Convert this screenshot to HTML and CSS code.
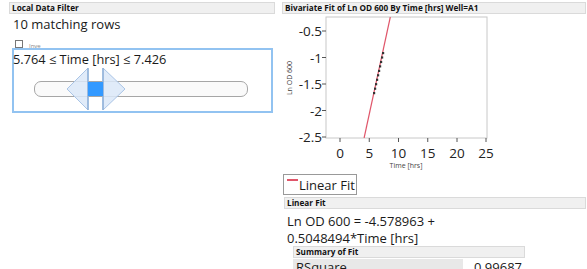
FILE: index.html
```html
<!DOCTYPE html>
<html lang="en">
<head>
    <meta charset="UTF-8">
    <title>Bivariate Fit</title>
    <link rel="stylesheet" href="styles.css">
</head>
<body>
    <div class="app">
        <section class="filter">
            <div class="hdr">Local Data Filter</div>
            <div class="count">10 matching rows</div>
            <div class="invert">
                <span class="check"></span>
                <span class="invert-label">Inve</span>
            </div>
            <div class="range">
                <div class="range-text">5.764 ≤ Time [hrs] ≤ 7.426</div>
                <div class="slider">
                    <div class="track"></div>
                    <svg class="handles" width="64" height="42" viewBox="0 0 64 42">
                        <polygon points="0,21 21,0 21,42" fill="#dbe8f8" fill-opacity="0.85" stroke="#a9c4e6" stroke-width="1"/>
                        <line x1="21" y1="0" x2="21" y2="42" stroke="#8fb0d8" stroke-width="1.5"/>
                        <polygon points="58,21 36,0 36,42" fill="#dbe8f8" fill-opacity="0.85" stroke="#a9c4e6" stroke-width="1"/>
                        <line x1="36" y1="0" x2="36" y2="42" stroke="#8fb0d8" stroke-width="1.5"/>
                        <rect x="21" y="14" width="15" height="14" fill="#3399ff"/>
                    </svg>
                </div>
            </div>
        </section>

        <section class="report">
            <div class="hdr">Bivariate Fit of Ln OD 600 By Time [hrs] Well=A1</div>
            <svg class="plot" width="220" height="158" viewBox="0 0 220 158">
                <defs>
                    <clipPath id="frame"><rect x="44" y="3" width="161" height="121"/></clipPath>
                </defs>
                <rect x="44" y="3" width="161" height="121" fill="#fff" stroke="#c8c8c8"/>
                <g stroke="#555" stroke-width="1">
                    <line x1="40" y1="17" x2="44" y2="17"/>
                    <line x1="40" y1="43.5" x2="44" y2="43.5"/>
                    <line x1="40" y1="70" x2="44" y2="70"/>
                    <line x1="40" y1="96.5" x2="44" y2="96.5"/>
                    <line x1="40" y1="123" x2="44" y2="123"/>
                    <line x1="58" y1="124" x2="58" y2="128"/>
                    <line x1="87.25" y1="124" x2="87.25" y2="128"/>
                    <line x1="116.5" y1="124" x2="116.5" y2="128"/>
                    <line x1="145.75" y1="124" x2="145.75" y2="128"/>
                    <line x1="175" y1="124" x2="175" y2="128"/>
                    <line x1="204" y1="124" x2="204" y2="128"/>
                </g>
                <g class="tick" text-anchor="end">
                    <text x="40" y="22">-0.5</text>
                    <text x="40" y="48.5">-1</text>
                    <text x="40" y="75">-1.5</text>
                    <text x="40" y="101.5">-2</text>
                    <text x="40" y="128">-2.5</text>
                </g>
                <g class="tick" text-anchor="middle">
                    <text x="58" y="144">0</text>
                    <text x="87.25" y="144">5</text>
                    <text x="116.5" y="144">10</text>
                    <text x="145.75" y="144">15</text>
                    <text x="175" y="144">20</text>
                    <text x="204" y="144">25</text>
                </g>
                <text class="axis-title" x="10" y="64" text-anchor="middle" transform="rotate(-90 10 64)">Ln OD 600</text>
                <text class="axis-title" x="124" y="154" text-anchor="middle">Time [hrs]</text>
                <g clip-path="url(#frame)">
                    <line x1="82.1" y1="124" x2="108.3" y2="3" stroke="#e0566a" stroke-width="1.2"/>
                </g>
                <g fill="#333">
                    <rect x="91" y="78" width="2.2" height="2.2"/>
                    <rect x="92" y="73.6" width="2.2" height="2.2"/>
                    <rect x="93" y="69.1" width="2.2" height="2.2"/>
                    <rect x="94" y="64.7" width="2.2" height="2.2"/>
                    <rect x="95" y="60.2" width="2.2" height="2.2"/>
                    <rect x="96" y="55.8" width="2.2" height="2.2"/>
                    <rect x="97" y="51.3" width="2.2" height="2.2"/>
                    <rect x="98" y="46.9" width="2.2" height="2.2"/>
                    <rect x="99" y="42.4" width="2.2" height="2.2"/>
                    <rect x="100" y="38" width="2.2" height="2.2"/>
                </g>
            </svg>

            <div class="legend"><span class="swatch"></span>Linear Fit</div>

            <div class="hdr fit-hdr">Linear Fit</div>
            <div class="equation">
                <div>Ln OD 600 = -4.578963 +</div>
                <div>0.5048494*Time [hrs]</div>
            </div>

            <div class="summary">
                <div class="hdr">Summary of Fit</div>
                <div class="row">
                    <span class="row-key">RSquare</span>
                    <span class="row-val">0.99687</span>
                </div>
            </div>
        </section>
    </div>
</body>
</html>
```

FILE: styles.css
```css
body {
    margin: 0;
    width: 587px;
    height: 269px;
    overflow: hidden;
    background: #fff;
    color: #1a1a1a;
    font-family: "Open Sans", "Noto Sans", sans-serif;
}
.app {
    display: flex;
    padding-top: 2px;
}
.hdr {
    height: 10px;
    line-height: 10px;
    font-size: 8.2px;
    font-weight: bold;
    padding-left: 2px;
    background: #f0f0f0;
    border: 1px solid #dadada;
    color: #111;
    white-space: nowrap;
    overflow: hidden;
}

/* left side: data filter */
.filter {
    margin-left: 9px;
    width: 266px;
}
.count {
    font-size: 13px;
    line-height: 18px;
    margin-top: 1px;
    padding-left: 4px;
}
.invert {
    position: relative;
    height: 8px;
    padding: 7px 0 0 6px;
}
.check {
    display: block;
    width: 6px;
    height: 6px;
    border: 1px solid #777;
}
.invert-label {
    position: absolute;
    left: 20px;
    top: 9px;
    font-size: 6px;
    line-height: 8px;
    color: #888;
}
.range {
    margin-left: 3px;
    width: 257px;
    height: 61px;
    border: 2px solid #92c3f1;
}
.range-text {
    font-size: 12.8px;
    line-height: 18px;
    margin-left: -1px;
}
.slider {
    position: relative;
    margin: 13px 0 0 20px;
    width: 214px;
}
.track {
    height: 14px;
    border: 1px solid #a6a6a6;
    border-radius: 7px;
    background: #fafafa;
}
.handles {
    position: absolute;
    left: 33px;
    top: -13px;
}

/* right side: report */
.report {
    margin-left: 7px;
    width: 304px;
}
.plot {
    display: block;
}
.tick {
    font-size: 13.5px;
    fill: #222;
}
.axis-title {
    font-size: 7px;
    fill: #444;
}
.legend {
    display: flex;
    align-items: center;
    margin: 2px 0 0 1px;
    width: 72px;
    height: 19px;
    border: 1px solid #999;
    font-size: 13px;
}
.swatch {
    align-self: flex-start;
    margin: 4px 1px 0 3px;
    width: 11px;
    height: 1.5px;
    background: #e0566a;
}
.fit-hdr {
    margin-top: 2px;
    margin-left: 2px;
}
.equation {
    font-size: 13px;
    line-height: 17px;
    padding-left: 5px;
    margin-top: 4px;
}
.summary {
    margin-left: 11px;
    width: 232px;
}
.summary .hdr {
    margin-top: -1px;
}
.row {
    display: flex;
    margin-top: 1px;
    font-size: 13px;
    line-height: 17px;
}
.row-key {
    width: 167px;
    padding-left: 3px;
    background: #e8e8e8;
}
.row-val {
    flex: 1;
    text-align: right;
    padding-right: 3px;
}
```
